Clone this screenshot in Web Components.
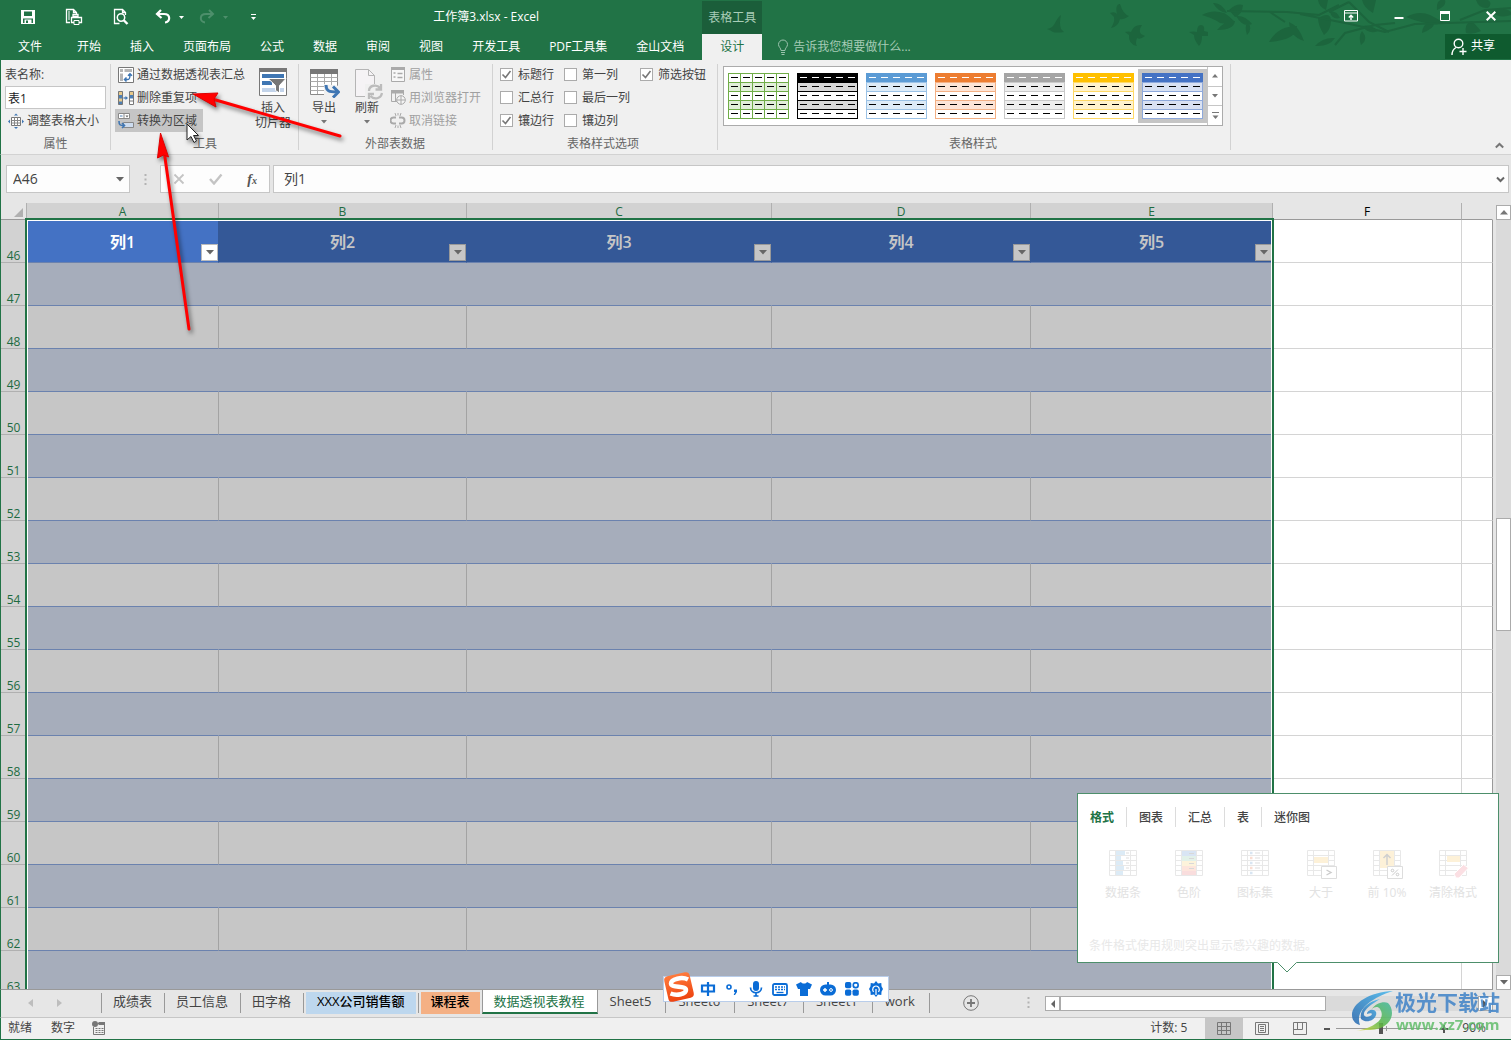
<!DOCTYPE html>
<html lang="zh-CN">
<head>
<meta charset="utf-8">
<title>工作簿3.xlsx - Excel</title>
<style>
html,body{margin:0;height:100%}
body{font:12px/16px "Open Sans","Noto Sans CJK SC",sans-serif;color:#444;background:#e6e6e6;overflow:hidden}
</style>
</head>
<body>
<xl-app></xl-app>
<script>
const RESET = `*{box-sizing:border-box}button,input{font:inherit;color:inherit;margin:0;border:0;padding:0;background:none;border-radius:0;outline:0}button{cursor:default;white-space:nowrap}svg{display:block}`;
function define(name, template) {
  customElements.define(name, class extends HTMLElement {
    connectedCallback() {
      if (this.shadowRoot) return;
      const root = this.attachShadow({ mode: 'open' });
      const html = typeof template === 'function' ? template(this) : template;
      root.innerHTML = `<style>${RESET}</style>` + html;
    }
  });
}
const svg = (w, h, body) => `<svg width="${w}" height="${h}" viewBox="0 0 ${w} ${h}" fill="none" aria-hidden="true">${body}</svg>`;
const miniGrid = (extra) => svg(32, 32, `<path d="M2.500 3.500h27v25h-27zM2.500 8.500h27M2.500 13.500h27M2.500 18.500h27M2.500 23.500h27M8.500 3.500v25M23.500 3.500v25" stroke="#e8e8e8"/>` + extra);

const ICONS = {
  save: svg(16,16,'<path d="M1 1h14v14H1z" fill="#fff"/><path d="M4 2.500h8V7H4zM3 9.500h10V14H3z" fill="#217346"/><path d="M4.500 10.500h7V14h-7z" fill="#fff"/><path d="M6 11.500h2V14H6z" fill="#217346"/>'),
  print: svg(18,18,'<path d="M5 14.500H1.500V1.500h7l3 3V6M8.500 1.500v3h3" stroke="#fff" stroke-width="1.300"/><path d="M4 3v9" stroke="#fff"/><path d="M8 8.500h5V6.500H8zM6.500 9.500h10v5h-10z" stroke="#fff" stroke-width="1.300"/><path d="M9 12.500h5v4H9z" fill="#217346" stroke="#fff"/>'),
  preview: svg(18,18,'<path d="M13.500 7V4.500l-3-3h-8v14h5M10.500 1.500v3h3" stroke="#fff" stroke-width="1.300"/><circle cx="9" cy="9.500" r="3.700" stroke="#fff" stroke-width="1.500"/><path d="M11.500 12l4 4" stroke="#fff" stroke-width="2.400"/>'),
  undo: svg(16,16,'<path d="M6 1L2 5l4.500 4M2.500 5H9c7 0 6.500 8 1 8.500" stroke="#fff" stroke-width="2.200"/>'),
  redo: svg(16,16,'<path d="M10 1l4 4-4.500 4M13.500 5H7c-7 0-6.500 8-1 8.500" stroke="#4d8f6b" stroke-width="2"/>'),
  caretW: svg(5,3,'<path d="M0 0h5L2.500 3z" fill="#fff"/>'),
  caretDim: svg(5,3,'<path d="M0 0h5L2.500 3z" fill="#4d8f6b"/>'),
  custom: svg(5,7,'<path d="M0 .5h5" stroke="#fff"/><path d="M0 3h5L2.500 6z" fill="#fff"/>'),
  caret: svg(6,4,'<path d="M0 0h6L3 3.500z" fill="#777"/>'),
  caretBig: svg(8,5,'<path d="M0 0h8L4 4.500z" fill="#666"/>'),
  caretUp: svg(6,4,'<path d="M0 3.500h6L3 0z" fill="#777"/>'),
  caretUpBig: svg(8,5,'<path d="M0 4.500h8L4 0z" fill="#777"/>'),
  more: svg(7,7,'<path d="M0 .5h7" stroke="#777"/><path d="M.5 3.500h6L3.500 7z" fill="#777"/>'),
  triL: svg(5,8,'<path d="M5 0v8L0 4z" fill="#bdbdbd"/>'),
  triR: svg(5,8,'<path d="M0 0v8l5-4z" fill="#bdbdbd"/>'),
  triLd: svg(5,8,'<path d="M5 0v8L1 4z" fill="#666"/>'),
  triRd: svg(5,8,'<path d="M0 0v8l4-4z" fill="#555"/>'),
  chevron: svg(9,7,'<path d="M1 1.500l3.500 3.500L8 1.500" stroke="#666" stroke-width="2"/>'),
  collapse: svg(9,7,'<path d="M.8 5.500L4.500 2l3.700 3.500" stroke="#777" stroke-width="2"/>'),
  bulb: svg(12,16,'<path d="M4 11.500C4 9 1.500 8 1.500 5.500a4.500 4.500 0 0 1 9 0C10.500 8 8 9 8 11.500zM4 13.500h4M4.500 15.500h3" stroke="#9cc3ae"/>'),
  ribbonOpts: svg(14,12,'<path d="M.5.500h13v10.500H.5zM.5 3h13" stroke="#fff"/><path d="M7 10V5.500M4.800 7.500L7 5.200l2.200 2.300" stroke="#fff" stroke-width="1.400"/>'),
  min: svg(10,10,'<path d="M.5 7h9" stroke="#fff" stroke-width="2"/>'),
  max: svg(10,10,'<path d="M.5.500h9v9h-9z" stroke="#fff"/><path d="M0 0h10v3H0z" fill="#fff"/>'),
  close: svg(10,10,'<path d="M.7.700l8.600 8.600M9.300.700L.7 9.300" stroke="#fff" stroke-width="2"/>'),
  share: svg(16,18,'<circle cx="7.500" cy="5.500" r="4.300" stroke="#fff" stroke-width="1.400"/><path d="M1 17c0-3.500 1.500-6 4-7.500M12 10v7M8.500 13.500h7" stroke="#fff" stroke-width="1.400"/>'),
  resize: svg(16,16,'<path d="M3.500 4.500h9v8h-9z" fill="#fff" stroke="#777"/><path d="M3.500 7.500h9M3.500 10h9M6.500 4.500v8M9.500 4.500v8" stroke="#888"/><path d="M6 2.500L8 .5l2 2zM6 14l2 2 2-2zM2 6.500l-2 2 2 2zM14 6.500l2 2-2 2z" fill="#3f76b3"/>'),
  pivot: svg(16,16,'<path d="M.5.500h15v15H.5z" fill="#fff" stroke="#777"/><path d="M2 2h3v3H2zM6.500 2H14v3H6.500zM2 6.500h3V14H2z" fill="#b5b5b5"/><path d="M7 12.500h2.500c2 0 2.500-1 2.500-5M8.500 10.500l-2 2 2 2M10 8.700l2-2 2 2" stroke="#3f76b3" stroke-width="1.500"/>'),
  dedupe: svg(16,14,'<path d="M.5.500h4v13h-4z" fill="#4d7fb5" stroke="#777"/><path d="M1 1h3v3H1zM1 7.500h3v3H1z" fill="#e8c98a"/><path d="M11.500.500h4v13h-4z" fill="#fff" stroke="#777"/><path d="M12 1h3v3h-3z" fill="#e8c98a"/><path d="M12 4h3v3.500h-3z" fill="#4d7fb5"/><path d="M11.500 10h4" stroke="#777"/><path d="M5.500 7h3" stroke="#3f76b3" stroke-width="1.300"/><path d="M7.500 5L10 7 7.500 9z" fill="#3f76b3"/>'),
  torange: svg(16,16,'<path d="M.5.500h11v5H.5zM6 .5v5" fill="#fff" stroke="#888"/><path d="M2 3h2.500" stroke="#4d7fb5"/><path d="M7.500 2.500h3L9 4.500z" fill="#666"/><path d="M5.500 9.500h10v5h-10z" fill="#cddcef" stroke="#888"/><path d="M1 8c0 4 1 4.500 5 4.500M4 10l2.500 2.500L4 15" stroke="#3f76b3" stroke-width="1.600"/>'),
  slicer: svg(28,28,'<path d="M.5.500h27v27H.5z" fill="#fff" stroke="#777"/><path d="M0 0h28v4H0z" fill="#777"/><path d="M3 6h22v4H3zM3 13h10v4H3z" fill="#3f76b3"/><path d="M3 20h22v4H3z" fill="#c3d4ea"/><path d="M9 10.500h18l-6.500 7V25l-4-2.500v-5z" fill="#777" stroke="#fff"/>'),
  exp: svg(32,30,'<path d="M2.500 1.500h27v25h-27z" fill="#fff" stroke="#888"/><path d="M2.500 9.500h27M2.500 13.500h27M2.500 18.500h27M2.500 22.500h27M9.500 5v21M16.500 5v21M23.500 5v21" stroke="#aaa"/><path d="M2 1h28v5H2z" fill="#777"/><path d="M16 16v13h16V18z" fill="#f0f0f0"/><path d="M18 17c0 6 3 7 11 7M25 18.500l5.500 5.500-5.500 5.500" stroke="#3f76b3" stroke-width="3"/>'),
  refresh: svg(32,32,'<path d="M4.500 1.500h13l6 6v21h-19z" fill="#f5f3f5" stroke="#b5b5b5"/><path d="M17.500 1.500v6h6" stroke="#b5b5b5"/><path d="M14 16h18v16H14z" fill="#f0f0f0"/><path d="M18 23c0-6 8-7 11-3M30 16v5.500h-5.500M31 25c-1 6-8 7-11.500 3M18 31v-5h5" stroke="#bcbcbc" stroke-width="2.300"/>'),
  props: svg(14,15,'<path d="M.5.500h13v14H.5z" fill="#f8f8f8" stroke="#aaa"/><path d="M0 0h14v3H0z" fill="#aaa"/><path d="M2.500 6h2M2.500 10h2M6.500 6.500h5M6.500 10.500h5" stroke="#aaa" stroke-width="1.500"/>'),
  browser: svg(15,15,'<path d="M6 11.500H.5V.5h12V5M4.500 3v9M.5 3h12" stroke="#aaa"/><path d="M0 0h13v3H0z" fill="#aaa"/><circle cx="10" cy="10" r="4.300" fill="#f4f4f4" stroke="#aaa"/><path d="M5.700 10h8.600M10 5.700v8.600" stroke="#aaa"/>'),
  unlink: svg(16,15,'<path d="M6 4.500H3.500a3 3 0 0 0 0 6H6M9 4.500h2.500a3 3 0 0 1 0 6H9" stroke="#aaa" stroke-width="2"/><path d="M5 0l1 3M8 0v2.500M11 0l-1 3M5 15l1-3M8 15v-2.500M11 15l-1-3" stroke="#aaa"/>'),
  cancel: svg(12,12,'<path d="M1.500 1.500l9 9M10.500 1.500l-9 9" stroke="#c4c4c4" stroke-width="1.800"/>'),
  ok: svg(14,12,'<path d="M1 6l4 4.500L12.500 1.500" stroke="#c4c4c4" stroke-width="2.400"/>'),
  check: svg(11,11,'<path d="M1.500 5.500l3 3 5-6.500" stroke="#777" stroke-width="1.600"/>'),
  macro: svg(14,14,'<path d="M1.500 6v7.500h11V2.500H6" stroke="#777"/><path d="M6.500 1H13v3H6.500z" fill="#777"/><circle cx="3" cy="3" r="3" fill="#777"/><path d="M3.500 7.500h8M3.500 9.500h8M3.500 11.500h8" stroke="#777" stroke-dasharray="2 1"/>'),
  vNormal: svg(14,13,'<path d="M.5.500h13v12H.5zM.5 4.500h13M.5 8.500h13M4.500.500v12M9.500.500v12" stroke="#777"/>'),
  vLayout: svg(14,13,'<path d="M.5.500h13v12H.5z" stroke="#777"/><path d="M3.500 2.500h7v8h-7zM5 4.500h4M5 6.500h4M5 8.500h4" stroke="#777"/>'),
  vBreak: svg(14,13,'<path d="M.5.500h13v12H.5zM4.500.500v7M9.500.500v7M.5 7.500h9" stroke="#777"/>'),
  plus: svg(16,16,'<circle cx="8" cy="8" r="7.300" stroke="#777"/><path d="M8 4v8M4 8h8" stroke="#777" stroke-width="1.800"/>'),
  dots: svg(3,11,'<path d="M.5 0h2v2h-2zM.5 4.500h2v2h-2zM.5 9h2v2h-2z" fill="#b3b3b3"/>'),
  qaBars: miniGrid('<path d="M9 4h9v4H9zM9 9h5v4H9zM9 14h7v4H9zM9 19h8v4H9zM9 24h7v4H9z" fill="#dcebf6"/><path d="M19 6h3M19 11h3M19 16h3M19 21h3" stroke="#ddd"/>'),
  qaScale: miniGrid('<path d="M9 4h14v5H9z" fill="#d9e5f4"/><path d="M9 9h14v5H9z" fill="#e2f1e9"/><path d="M9 14h14v5H9z" fill="#fdf3db"/><path d="M9 19h14v5H9z" fill="#fde5dc"/><path d="M9 24h14v4H9z" fill="#f9dddd"/><path d="M16 6.500h5M16 11.500h5M16 16.500h5M16 21.500h5" stroke="#d8d8d8"/>'),
  qaIcons: miniGrid('<g stroke-width="2.500"><path d="M11 6h2.500M11 16h2.500M11 26h2.500" stroke="#d8e5f2"/><path d="M11 11h2.500M11 21h2.500" stroke="#f9ddd2"/></g><path d="M16 6h5M16 11h5M16 16h5M16 21h5" stroke="#ddd"/>'),
  qaGt: miniGrid('<path d="M9 10h14v6H9z" fill="#fdf1d8"/><path d="M16.500 19.500h15v12h-15z" fill="#fff" stroke="#ddd"/><path d="M21.500 23l4.500 2.500-4.500 2.500" stroke="#ccc" stroke-width="1.400"/>'),
  qaTop: miniGrid('<path d="M9 4h14v17H9z" fill="#fdf1d8"/><path d="M16 18V7.500M12.500 11L16 7.500l3.500 3.500" stroke="#cfcfcf" stroke-width="1.500"/><path d="M16.500 19.500h15v12h-15z" fill="#fff" stroke="#ddd"/><path d="M21 28.500l6-6" stroke="#ccc"/><circle cx="21.500" cy="23.500" r="1.300" stroke="#ccc"/><circle cx="26.500" cy="27.500" r="1.300" stroke="#ccc"/>'),
  qaClear: miniGrid('<path d="M10 9h13v6H10z" fill="#fdf1d8"/><path d="M17 27l9.500-9.500 5 3.500L22 31h-3z" fill="#fbdfe3" stroke="#fff"/>'),
  sZhong: svg(16,16,'<path d="M2 4.500h12v6H2zM8 1v14" stroke="#0a6cd6" stroke-width="2.200"/>'),
  sPunct: svg(14,16,'<circle cx="4" cy="6" r="2" stroke="#0a6cd6" stroke-width="1.600"/><path d="M9 8.500h3v2.500l-2 3H8.700l1.300-3H9z" fill="#0a6cd6"/>'),
  sMic: svg(14,16,'<rect x="4" y="0" width="6" height="10" rx="3" fill="#0a6cd6"/><path d="M1.500 6.500c0 7 11 7 11 0M7 11.500V15M4.500 15h5" stroke="#0a6cd6" stroke-width="1.700"/>'),
  sKey: svg(16,13,'<rect x="1" y="1" width="14" height="11" rx="1.500" stroke="#0a6cd6" stroke-width="1.800"/><path d="M3 4h10M3 6.500h10" stroke="#0a6cd6" stroke-width="1.500" stroke-dasharray="2 1"/><path d="M4.500 9.500h7" stroke="#0a6cd6" stroke-width="1.300"/>'),
  sShirt: svg(16,14,'<path d="M5 0c1 2 5 2 6 0l5 2.500-2 4.500h-2v7H4V7H2L0 2.500z" fill="#0a6cd6"/>'),
  sBot: svg(16,14,'<path d="M7 0h2v3H7z" fill="#0a6cd6"/><rect x="0" y="2.500" width="16" height="11" rx="5.500" fill="#0a6cd6"/><path d="M3 8h4M5 6v4" stroke="#fff" stroke-width="1.400"/><circle cx="11" cy="8" r="1.400" stroke="#fff"/>'),
  sGrid: svg(14,14,'<g fill="#0a6cd6"><rect width="6.300" height="6.300" rx="1.800"/><rect y="7.500" width="6.300" height="6.300" rx="1.800"/><rect x="7.500" y="7.500" width="6.300" height="6.300" rx="1.800"/></g><rect x="8.300" y=".8" width="4.800" height="4.800" rx="2" stroke="#0a6cd6" stroke-width="1.700"/>'),
  sGear: svg(14,16,'<path d="M7 0l2 2.500 3.300-.5.200 3.300L14 8l-1.500 2.700-.2 3.300-3.300-.5L7 16l-2-2.500-3.300.5-.2-3.300L0 8l1.500-2.700.2-3.300 3.300.5z" fill="#0a6cd6"/><path d="M4.500 11c-2-3 0-6 2.500-6s4.500 3 2.500 6M7 8v6" stroke="#fff" stroke-width="1.200"/>'),
  sogou: svg(32,32,'<defs><linearGradient id="sg" x1="0" y1="0" x2="0" y2="1"><stop offset="0" stop-color="#ff7a3c"/><stop offset="1" stop-color="#ee4410"/></linearGradient></defs><rect x="3" y="3" width="26" height="26" rx="4" fill="url(#sg)" transform="rotate(-13 16 16)"/><path d="M25 8.500C19 5.500 8 8 8 12.500c0 5 15 1.500 15 6.500 0 4-9 6-15.500 3.500" stroke="#fff" stroke-width="4.500"/>')
};
define('xl-icon', el => `<style>:host{display:block;flex:none}</style>${ICONS[el.getAttribute('name')] || ''}`);

/* Title bar and ribbon tabs */
define('xl-foliage', `<style>:host{display:block}</style>
${svg(511,60,`<g fill="#1c653d"><path d="M47 29q6-1 8-6 3-6 6-8-2 8 0 14l3 3q-8 1-11 0-3-2-6-3z"/><path d="M110 13q5-2 7 1c-2-8 1-10 3-10q3 10 9 12-6 4-9 3-2 8-9 9 4-6 3-11z"/><path d="M125 32q4-1 6 0 3-8 11-7-4 6-1 9l4 2q-5 4-8 2-2 5 0 8-9-2-8-11z"/><path d="M189 32q5-1 8 0 0-7 4-7t3 6l4 1v4l-6 0q0 7-3 10-5-6-5-11z"/>
<path d="M202 15q10-6 22-2 4 2 10 8-12 5-17 0-8-4-15-6zM213 3q8-1 14 10-9-1-14-10zM217 30q8-10 18-9-1 9-18 9zM229 10q8-7 14-5-1 10-8 12zM236 16q9-1 16 8-9 4-16-8zM247 35q-3-9 1-13 5 7-1 13zM269 42q9-16 28-16 0 14-28 16zM289 22q10 4 15 19-14-4-15-19zM318 18q12-7 13 2 0 10-7 15-6-10-6-17zM315 46q8-9 20-8-6 9-20 8zM318 0h10l-2 10q-7-3-8-10zM330 12q6-2 10 6-8 2-10-6zM362 0h14l-3 13q-9-5-11-13zM362 26q9-2 16 5-9 4-16-5zM361 45q-3-9 1-14 7 8-1 14zM406 17q13-7 24-2l15 8q-14 4-39-6zM422 33q1-12 12-10 1 5-12 10zM437 10q-1-12 8-10 2 6-8 10zM466 33q-2-10 6-12l9 10q-9 4-15 2zM476 0h12q5 3 0 8-9 1-12-8zM491 12q14-6 20 0v3q-11 4-20-3z"/></g>
<path d="M227 11l60 1 32 3 20-10M270 12l15 10M300 14l50 10 35 8 30-8 96-3M329 12l20-10M349 2l20 20 20 10M335 45l10-12 30-8 20-2M460 20l25-10 26-2" stroke="#1c653d" stroke-width="2"/>`)}`);

define('xl-header', `<style>
:host{display:grid;grid-template-columns:auto auto 1fr;grid-template-rows:34px 26px;background:#217346;color:#fff;position:relative}
xl-foliage{position:absolute;right:0;top:0}
.title{display:flex;align-items:center;min-width:0;padding-left:20px}
.qat{display:flex;align-items:center;height:32px}
.qat button{display:flex;align-items:center;gap:8px}
h1{flex:1;margin:0;font-size:12px;font-weight:400;text-align:center;line-height:36px;padding-left:14px}
.ctx{background:#1b5e3a;color:#a9cdb8;text-align:center;line-height:34px;margin-top:1px}
.win{display:flex;justify-content:flex-end;align-items:center;gap:36px;padding-right:15px;height:32px;position:relative}
nav{display:flex;gap:29px;padding:0 18px;align-items:center}
nav button{line-height:22px;height:24px}nav button:first-child{margin-right:6px}
.design{background:#f0f0f0;color:#217346;padding:0 18px;line-height:22px}
.last{display:flex;justify-content:space-between;position:relative}
.tell{display:flex;align-items:center;gap:4px;padding-left:15px;color:#a6cbb6}
.share{display:flex;align-items:center;gap:4px;background:#0f5b2f;padding:0 16px 0 6px;height:25px;line-height:20px}
.share span{height:22px}
</style>
<xl-foliage></xl-foliage>
<div class="title"><div class="qat">
<button aria-label="保存"><xl-icon name="save"></xl-icon></button>
<button aria-label="打印" style="margin-left:29px"><xl-icon name="print"></xl-icon></button>
<button aria-label="预览" style="margin-left:29px"><xl-icon name="preview"></xl-icon></button>
<button aria-label="撤消" style="margin-left:25px"><xl-icon name="undo"></xl-icon><xl-icon name="caretW"></xl-icon></button>
<button aria-label="恢复" style="margin-left:15px"><xl-icon name="redo"></xl-icon><xl-icon name="caretDim"></xl-icon></button>
<button aria-label="自定义" style="margin-left:23px"><xl-icon name="custom"></xl-icon></button>
</div><h1>工作簿3.xlsx - Excel</h1></div>
<div class="ctx">表格工具</div>
<div class="win"><button aria-label="功能区选项"><xl-icon name="ribbonOpts"></xl-icon></button><button aria-label="最小化"><xl-icon name="min"></xl-icon></button><button aria-label="最大化"><xl-icon name="max"></xl-icon></button><button aria-label="关闭"><xl-icon name="close"></xl-icon></button></div>
<nav>${['文件','开始','插入','页面布局','公式','数据','审阅','视图','开发工具','PDF工具集','金山文档'].map(t=>`<button>${t}</button>`).join('')}</nav>
<button class="design">设计</button>
<div class="last"><button class="tell"><xl-icon name="bulb"></xl-icon><span>告诉我您想要做什么...</span></button><button class="share"><xl-icon name="share"></xl-icon><span>共享</span></button></div>`);

/* Ribbon */
define('ribbon-group', el => `<style>
:host{display:flex;flex-direction:column;height:94px;padding:3px var(--r,4px) 0 var(--l,4px);background:linear-gradient(#d2d2d2,#d2d2d2) right 4px/1px 86px no-repeat;border-right:1px solid transparent;background-origin:border-box}
.c{display:flex;height:69px}.l{line-height:24px;height:22px;text-align:center;color:#666}</style>
<div class="c"><slot></slot></div><div class="l">${el.getAttribute('label')}</div>`);
define('ribbon-small', el => `<style>:host{display:flex;height:23px}
button{display:flex;align-items:center;gap:3px;height:23px;padding:0 6px 0 3px}
:host([active]) button{background:#c5c5c5}:host([dim]) button{color:#a0a0a0;padding-left:1px}
.i{width:16px;display:flex;justify-content:center}.t{line-height:18px;padding-top:1px}</style>
<button><span class="i"><xl-icon name="${el.getAttribute('icon')}"></xl-icon></span><span class="t"><slot></slot></span></button>`);
define('ribbon-large', el => `<style>:host{display:block;width:var(--w,44px)}
button{display:flex;flex-direction:column;align-items:center;width:100%;line-height:15px;padding-top:5px;white-space:normal}
.i{height:32px}xl-icon[name=caret]{margin-top:5px}</style>
<button><span class="i"><xl-icon name="${el.getAttribute('icon')}"></xl-icon></span><slot></slot>${el.hasAttribute('menu') ? '<xl-icon name="caret"></xl-icon>' : ''}</button>`);
define('ribbon-check', el => `<style>:host{display:flex;height:23px;align-items:center}
label{display:flex;align-items:center;gap:5px;position:relative;height:21px}
input{appearance:none;width:13px;height:13px;border:1px solid #ababab;background:#fff}
xl-icon{position:absolute;left:1px;top:5px;display:none}input:checked+xl-icon{display:block}</style>
<label><input type="checkbox" ${el.hasAttribute('checked') ? 'checked' : ''}><xl-icon name="check"></xl-icon><span><slot></slot></span></label>`);
define('style-swatch', el => {
  const [head, line, band, mark] = el.getAttribute('colors').split(',');
  let b = `<rect x=".5" y=".5" width="60" height="45" fill="#fff" stroke="${line}"/>`;
  b += `<path d="M1 10h59v8H1zM1 28h59v8H1z" fill="${band}"/>`;
  if (head !== '#fff') b += `<path d="M0 0h61v9H0z" fill="${head}"/>`;
  b += `<path d="M1 9.500h59M1 18.500h59M1 27.500h59M1 36.500h59" stroke="${line}"/>`;
  if (el.hasAttribute('grid')) b += `<path d="M12.500 1v44M24.500 1v44M36.500 1v44M48.500 1v44" stroke="${line}"/>`;
  for (let r = 0; r < 5; r++) b += `<path d="M3 ${4.5 + r * 9}h57" stroke="${r ? '#000' : mark}" stroke-dasharray="7 5"/>`;
  return `<style>:host{display:block}button{display:block;padding:4px;height:54px;width:69px}:host([active]) button{background:#c5c5c5}</style><button aria-label="表格样式">${svg(61,46,b)}</button>`;
});
define('xl-ribbon', `<style>
:host{display:flex;background:#f0f0f0;border-bottom:1px solid #d2d2d2;height:95px;border-left:1px solid #217346}
.col{display:flex;flex-direction:column}
.name{line-height:24px;height:23px}
input.n{width:101px;height:23px;border:1px solid #c6c6c6;background:#fff;padding:0 2px;color:#222}
.opts{display:grid;grid-template-columns:64px 76px 66px;grid-auto-rows:23px}
.gal{display:flex;width:500px;height:60px;border:1px solid #ababab;background:#fff;margin-top:3px}
.sw{display:flex;padding:2px 0 0 0;flex:1}
.sb{display:flex;flex-direction:column;width:15px;border-left:1px solid #c6c6c6}
.sb button{flex:1;display:grid;place-items:center}.sb button+button{border-top:1px solid #c6c6c6}
.end{margin-left:auto;align-self:flex-end;padding:0 7px 5px 0}
</style>
<ribbon-group label="属性"><div class="col"><label class="name" for="tn">表名称:</label><input class="n" id="tn" value="表1"><ribbon-small icon="resize">调整表格大小</ribbon-small></div></ribbon-group>
<ribbon-group label="工具" style="--r:3px"><div class="col"><ribbon-small icon="pivot">通过数据透视表汇总</ribbon-small><ribbon-small icon="dedupe">删除重复项</ribbon-small><ribbon-small icon="torange" active>转换为区域</ribbon-small></div><ribbon-large icon="slicer">插入<br>切片器</ribbon-large></ribbon-group>
<ribbon-group label="外部表数据" style="--r:5px"><ribbon-large icon="exp" menu style="--w:42px">导出</ribbon-large><ribbon-large icon="refresh" menu>刷新</ribbon-large><div class="col"><ribbon-small icon="props" dim>属性</ribbon-small><ribbon-small icon="browser" dim>用浏览器打开</ribbon-small><ribbon-small icon="unlink" dim>取消链接</ribbon-small></div></ribbon-group>
<ribbon-group label="表格样式选项" style="--l:7px;--r:11px"><div class="opts"><ribbon-check checked>标题行</ribbon-check><ribbon-check>第一列</ribbon-check><ribbon-check checked>筛选按钮</ribbon-check><ribbon-check>汇总行</ribbon-check><ribbon-check>最后一列</ribbon-check><span></span><ribbon-check checked>镶边行</ribbon-check><ribbon-check>镶边列</ribbon-check></div></ribbon-group>
<ribbon-group label="表格样式" style="--l:5px;--r:7px"><div class="gal"><div class="sw">
<style-swatch grid colors="#fff,#70ad47,#e2efda,#000"></style-swatch><style-swatch colors="#000,#000,#d9d9d9,#fff"></style-swatch><style-swatch colors="#5b9bd5,#9bc2e6,#ddebf7,#fff"></style-swatch><style-swatch colors="#ed7d31,#f4b084,#fce4d6,#fff"></style-swatch><style-swatch colors="#a5a5a5,#c9c9c9,#ededed,#fff"></style-swatch><style-swatch colors="#ffc000,#ffd966,#fff2cc,#fff"></style-swatch><style-swatch active colors="#4472c4,#8ea9db,#d9e1f2,#fff"></style-swatch>
</div><div class="sb"><button aria-label="上"><xl-icon name="caretUp"></xl-icon></button><button aria-label="下"><xl-icon name="caret"></xl-icon></button><button aria-label="更多"><xl-icon name="more"></xl-icon></button></div></div></ribbon-group>
<button class="end" aria-label="折叠功能区"><xl-icon name="collapse"></xl-icon></button>`);

/* Formula bar */
define('formula-bar', `<style>
:host{display:flex;padding:10px 2px 10px 5px;height:48px;font-size:14px;border-left:1px solid #217346;background:#e6e6e6}
.box{display:flex;align-items:center;background:#fdfdfd;border:1px solid #c6c6c6;height:28px}
.nm{width:124px;padding:0 5px 0 6px}.nm input{flex:1;min-width:0}
.dots{width:30px;display:grid;place-items:center}
.fx{width:110px;justify-content:space-between;padding:0 12px 0 12px;margin-right:3px}
i{font:italic bold 14px "Liberation Serif",serif;color:#555}i small{font-size:10px}
.f{flex:1;padding:0 3px 0 10px}.f input{flex:1}</style>
<div class="box nm"><input aria-label="名称框" value="A46"><button aria-label="展开"><xl-icon name="caretBig"></xl-icon></button></div>
<div class="dots"><xl-icon name="dots"></xl-icon></div>
<div class="box fx"><button aria-label="取消"><xl-icon name="cancel"></xl-icon></button><button aria-label="输入"><xl-icon name="ok"></xl-icon></button><button aria-label="插入函数"><i>f<small>x</small></i></button></div>
<div class="box f"><input aria-label="编辑栏" value="列1"><button aria-label="展开编辑栏"><xl-icon name="chevron"></xl-icon></button></div>`);

/* Worksheet */
define('sheet-grid', () => {
  const cols = ['A','B','C','D','E'];
  let rows = '';
  for (let n = 46; n <= 63; n++) {
    const kind = n === 46 ? 'h' : n % 2 ? 'b' : 'p';
    rows += `<tr class="${kind}"><th scope="row">${n}</th>` + cols.map((c, i) => `<td class="s">${n === 46 ? `列${i + 1}<button aria-label="筛选"><xl-icon name="caretBig"></xl-icon></button>` : ''}</td>`).join('') + '<td></td><td></td></tr>';
  }
  return `<style>
:host{display:block;position:relative;overflow:hidden;border-left:1px solid #217346;border-bottom:1px solid #999;min-width:0}
table{table-layout:fixed;width:100%;border-spacing:0}
th,td{padding:0;overflow:hidden}
thead th{height:17px;font-weight:400;line-height:14px;padding-top:2px;border-right:1px solid #b0b0b0;border-bottom:1px solid #999;color:#000;background:#e6e6e6}
thead th.s{background:#d2d2d2;color:#1e6b41}
thead th:last-child{border-right-color:transparent}
tbody th{height:43px;vertical-align:bottom;font-weight:400;font-size:12px;line-height:12px;color:#1e6b41;background:#d2d2d2;border-bottom:1px solid #b0b0b0;border-right:1px solid #999}
td{background:#fff;border-right:1px solid #d4d4d4;border-bottom:1px solid #d4d4d4;text-align:center;position:relative;font-size:16px;padding-top:2px}
td:last-child{border-right-color:#999}
td.s{border-bottom-color:#6b82ae}
.h td.s{background:#345897;border-right-color:#345897;color:#c6c6c6;font-weight:600}
.h td.s:nth-child(2){background:#4472c4;background-clip:padding-box;color:#fff}
.b td.s{background:#a6adbb;border-right-color:#a6adbb}
.p td.s{background:#c6c6c6;border-right-color:#a3a3a3}
td button{position:absolute;right:0;bottom:1px;width:17px;height:17px;border:1px solid #999;background:#c6c6c6;display:grid;place-items:center}
td:nth-child(2) button{background:#fff;border-color:#bbb}
.corner{position:relative}.tri{position:absolute;right:3px;bottom:2px}
.sel{position:absolute;left:24px;top:15px;width:1249px;bottom:-4px;border:2px solid #217346;pointer-events:none;box-shadow:inset 0 0 0 1px #fff}
</style>
<table><colgroup><col style="width:26px"><col style="width:192px"><col style="width:248px"><col style="width:305px"><col style="width:259px"><col style="width:242px"><col style="width:189px"><col></colgroup>
<thead><tr><th class="corner"><span class="tri">${svg(9,9,'<path d="M9 0v9H0z" fill="#b0b0b0"/>')}</span></th>${cols.map(c => `<th class="s">${c}</th>`).join('')}<th>F</th><th></th></tr></thead><tbody>${rows}</tbody></table><div class="sel"></div>`;
});
define('v-scroll', `<style>:host{display:flex;flex-direction:column;width:15px;margin:2px 0 0 3px;background:#dadada}
button{height:15px;background:#fff;border:1px solid #ababab;display:grid;place-items:center;flex:none}
.a{flex:299}.t{flex:112;background:#fff;border:1px solid #ababab}.z{flex:345}</style>
<button aria-label="向上"><xl-icon name="caretUpBig"></xl-icon></button><div class="a"></div><div class="t"></div><div class="z"></div><button aria-label="向下"><xl-icon name="caretBig"></xl-icon></button>`);

define('quick-analysis', `<style>
:host{display:flex;flex-direction:column;position:absolute;right:12px;bottom:27px;width:422px;height:170px;background:#fff;border:1px solid #4d8f6b}
nav{display:flex;padding:13px 0 0}nav button{padding:0 12px;height:20px;line-height:22px;color:#444;font-weight:500}
nav button+button{border-left:1px solid #dcdcdc}nav button.on{color:#217346;font-weight:700}
.it{display:flex;padding:20px 0 0 12px}.it button{width:66px;display:flex;flex-direction:column;align-items:center;color:#e2e2e2;line-height:18px;gap:5px;height:55px}
p{margin:auto 0 7px 11px;color:#e8e8e8;line-height:18px}
.tip{position:absolute;right:201px;top:168px}
</style>
<nav><button class="on">格式</button><button>图表</button><button>汇总</button><button>表</button><button>迷你图</button></nav>
<div class="it">${[['qaBars','数据条'],['qaScale','色阶'],['qaIcons','图标集'],['qaGt','大于'],['qaTop','前 10%'],['qaClear','清除格式']].map(([i,t])=>`<button><xl-icon name="${i}"></xl-icon><span>${t}</span></button>`).join('')}</div>
<p>条件格式使用规则突出显示感兴趣的数据。</p><div class="tip">${svg(20,11,'<path d="M0 0h20L10 10z" fill="#fff"/><path d="M.5.500L10 10 19.500.500" stroke="#4d8f6b"/>')}</div>`);

/* Sheet tabs */
define('sheet-tabs', `<style>
:host{display:flex;height:28px;background:#e6e6e6;border-left:1px solid #217346;font-size:13px;align-items:flex-start;border-bottom:1px solid #c6c6c6}
.nav{display:flex;width:100px;gap:24px;padding:9px 0 0 27px}
.tab{height:20px;margin-top:3px;border-left:1px solid #999;padding:0 12px 4px 11px;line-height:16px;color:#444}
.lat{padding:0 14px 4px 12px}
.fill{border:0;margin:2px 2px 0 2px;height:22px;padding:0 11px 4px;color:#000;font-weight:500}
.bl{background:#bdd7ee}.or{background:#f4b084;padding:0 10px 4px}
.bar{border-left:1px solid #999;height:20px;margin:3px 0 0}
.on{background:#fff;border:0;border-left:1px solid #999;border-right:1px solid #999;border-bottom:2px solid #217346;height:24px;padding-bottom:0;color:#217346;margin-top:0}
.on+.tab{border-left:0}
.add{margin:5px 0 0 33px}
.dots{margin:7px 15px 0 auto}
.hs{display:flex;width:448px;height:15px;margin:6px 18px 0 0;background:#dadada}
.hs button{width:15px;background:#fff;border:1px solid #ababab;display:grid;place-items:center}.hs .t{width:266px;background:#fff;border:1px solid #ababab}.hs .g{flex:1}
</style>
<div class="nav"><button aria-label="上一个"><xl-icon name="triL"></xl-icon></button><button aria-label="下一个"><xl-icon name="triR"></xl-icon></button></div>
<button class="tab">成绩表</button><button class="tab">员工信息</button><button class="tab">田字格</button><span class="bar"></span>
<button class="tab fill bl">XXX公司销售额</button><span class="bar"></span><button class="tab fill or">课程表</button>
<button class="tab on">数据透视表教程</button><button class="tab lat">Sheet5</button><button class="tab lat">Sheet6</button><button class="tab lat">Sheet7</button><button class="tab lat">Sheet1</button><button class="tab lat">work</button><span class="bar"></span>
<button class="add" aria-label="新工作表"><xl-icon name="plus"></xl-icon></button>
<span class="dots"><xl-icon name="dots"></xl-icon></span>
<div class="hs"><button aria-label="向左"><xl-icon name="triLd"></xl-icon></button><div class="t"></div><div class="g"></div><button aria-label="向右"><xl-icon name="triRd"></xl-icon></button></div>`);

define('status-bar', `<style>
:host{display:flex;align-items:center;height:22px;background:#f0f0f0;border:1px solid #217346;border-width:0 0 1px 1px;padding-left:7px}
.l{display:flex;gap:19px;align-items:center;flex:1;line-height:18px}.l xl-icon{margin-left:-2px}
.l,.n,.pc{padding-bottom:2px}
.views{display:flex;margin-left:18px;align-self:stretch}.views button{width:38px;display:grid;place-items:center}.views .on{background:#c6c6c6}
.z{width:8px;margin-left:5px}.z+input+.z{margin-left:0}
input{appearance:none;width:100px;height:14px;margin:0 4px;background:linear-gradient(#999,#999) center/100% 1px no-repeat,linear-gradient(#999,#999) center/1px 5px no-repeat}
input::-webkit-slider-thumb{appearance:none;width:4px;height:11px;background:#555}
.pc{margin:0 25px 0 14px}</style>
<div class="l"><span>就绪</span><span>数字</span><xl-icon name="macro"></xl-icon></div><span class="n">计数: 5</span>
<div class="views"><button class="on" aria-label="普通"><xl-icon name="vNormal"></xl-icon></button><button aria-label="页面布局"><xl-icon name="vLayout"></xl-icon></button><button aria-label="分页预览"><xl-icon name="vBreak"></xl-icon></button></div>
<button class="z" aria-label="缩小">${svg(6,10,'<path d="M0 5h6" stroke="#555" stroke-width="2"/>')}</button><input type="range" aria-label="缩放" min="0" max="100" value="44"><button class="z" aria-label="放大">${svg(8,10,'<path d="M0 5h8M4 1v8" stroke="#555" stroke-width="2"/>')}</button><span class="pc">90%</span>`);

/* Floating layers */
define('ime-bar', `<style>:host{position:absolute;left:663px;bottom:38px;display:flex;align-items:center;box-sizing:border-box;height:26px;width:226px;background:#fff;border:1px solid #b9cdea;padding-left:32px}
.logo{position:absolute;left:-1px;top:-6px}.r{display:flex}.r span{width:24px;display:grid;place-items:center;height:24px}</style>
<div class="r">${['sZhong','sPunct','sMic','sKey','sShirt','sBot','sGrid','sGear'].map(n=>`<span><xl-icon name="${n}"></xl-icon></span>`).join('')}</div><xl-icon class="logo" name="sogou"></xl-icon>`);
define('pointer-marks', `<style>:host{position:absolute;left:0;top:0;pointer-events:none}svg{filter:drop-shadow(2px 3px 2px rgba(0,0,0,.5))}</style>
${svg(360,345,'<path d="M340 136L214 99.500" stroke="#f00" stroke-width="3" stroke-linecap="round"/><path d="M193 94l25-1-4 6 2 8z" fill="#f00" stroke="#d00"/><path d="M189 329L164.500 154" stroke="#f00" stroke-width="3" stroke-linecap="round"/><path d="M160.500 133l8 24-5-2-6 3z" fill="#f00" stroke="#d00"/><path d="M187 124v16l4-3.500 3 6 2.500-1.500-3-5.500h5z" fill="#fff" stroke="#222" stroke-width="1"/>')}`);
define('site-mark', `<style>:host{position:absolute;right:11px;bottom:7px;display:flex;align-items:flex-end;gap:1px;pointer-events:none;opacity:.85}
.t{display:flex;flex-direction:column;font-weight:700}.a{font-size:21px;line-height:26px;color:#3f83c8}.b{font:bold 15px/18px "Open Sans",sans-serif;color:#62bd6b;padding-left:1px}</style>
${svg(42,44,'<defs><linearGradient id="b" x1="0" y1="1" x2="1" y2="0"><stop stop-color="#2565ad"/><stop offset="1" stop-color="#45b8ee"/></linearGradient><linearGradient id="g" x1="0" y1="1" x2="1" y2="0"><stop stop-color="#e4dc3c"/><stop offset=".5" stop-color="#58b647"/><stop offset="1" stop-color="#43b8a0"/></linearGradient></defs><path d="M41 2C18 3 0 14 0 26c0 5 3 9 8 10-5-13 8-26 33-34z" fill="url(#b)"/><path d="M28 10C14 13 7 22 9 30c7 6 17-1 15-7-2-4-9-2-9 2 2-1 5-1 5 0-1 3-7 4-8 1-1-5 8-11 16-16z" fill="url(#b)"/><path d="M36 14c8 8 5 26-18 27-6 0-10 0-14 1 16-3 31-11 24-22-2-3-6-2-8 0 3-5 11-8 16-6z" fill="url(#g)"/>')}
<div class="t"><span class="a">极光下载站</span><span class="b">www.xz7.com</span></div>`);

define('xl-app', `<style>:host{display:flex;flex-direction:column;height:100vh;position:relative;overflow:hidden}
.work{display:flex;flex:1;min-height:0;position:relative}sheet-grid{flex:1}xl-header,xl-ribbon,formula-bar,sheet-tabs,status-bar{flex:none}</style>
<xl-header></xl-header><xl-ribbon></xl-ribbon><formula-bar></formula-bar>
<div class="work"><sheet-grid></sheet-grid><v-scroll></v-scroll><quick-analysis></quick-analysis></div>
<sheet-tabs></sheet-tabs><status-bar></status-bar>
<ime-bar></ime-bar><pointer-marks></pointer-marks><site-mark></site-mark>`);
</script>
</body>
</html>
